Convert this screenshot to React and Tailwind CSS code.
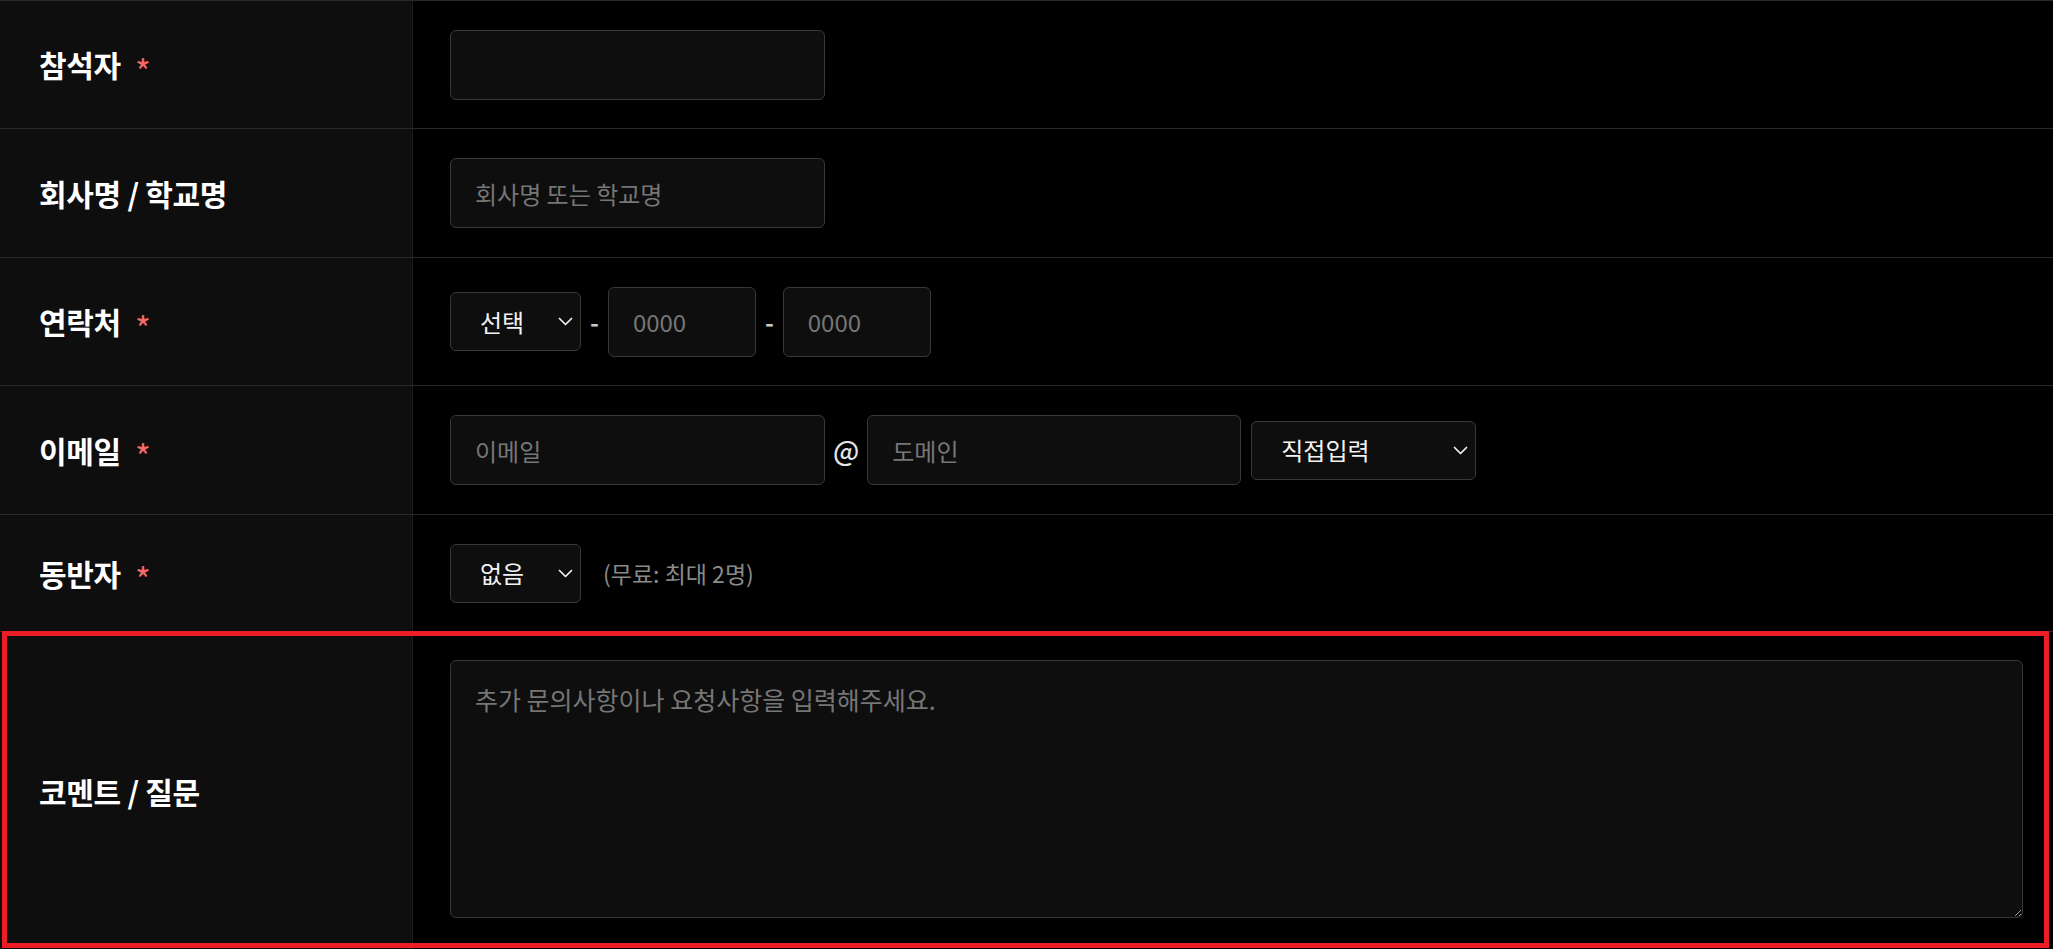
const inputBox =
  'h-[70px] rounded-[6px] border border-[#383838] bg-[#0e0e0e] px-6 text-[24px] text-white placeholder:text-[#767676] outline-none';

function Chevron() {
  return (
    <svg width="15" height="9" viewBox="0 0 15 9" fill="none" className="shrink-0">
      <path d="M1.5 1.5l6 6 6-6" stroke="#f2f2f2" strokeWidth="1.7" strokeLinecap="round" strokeLinejoin="round" />
    </svg>
  );
}

function FakeSelect({ value, width }) {
  return (
    <div
      className={`flex h-[59px] items-center justify-between rounded-[6px] border border-[#383838] bg-[#0e0e0e] pl-[29px] pr-[7px] text-[24px] text-[#f2f2f2] ${width}`}>
      <span>{value}</span>
      <Chevron />
    </div>
  );
}

function Row({ label, required, height, children }) {
  return (
    <div className={`flex border-b border-[#2a2a2a] ${height}`}>
      <div className="flex w-[413px] shrink-0 items-center border-r border-[#1c1c1c] bg-[#0e0e0e] pl-[39px]">
        <span className="text-[30px] font-bold tracking-[-0.01em] text-white">{label}</span>
        {required && (
          <span className="ml-[14px] translate-y-[6px] text-[34px] leading-none text-[#f26a6a]">*</span>
        )}
      </div>
      <div className="flex flex-1 items-center bg-black pl-[37px]">{children}</div>
    </div>
  );
}

export default function App() {
  return (
    <div className="min-h-screen bg-black font-['Noto_Sans_CJK_KR','Noto_Sans',sans-serif]">
      <div className="border-t border-[#2a2a2a]">
        <Row label="참석자" required height="h-[128px]">
          <input type="text" className={`${inputBox} w-[375px]`} />
        </Row>

        <Row label="회사명 / 학교명" height="h-[129px]">
          <input type="text" placeholder="회사명 또는 학교명" className={`${inputBox} w-[375px]`} />
        </Row>

        <Row label="연락처" required height="h-[128px]">
          <div className="flex items-center gap-[9px]">
            <FakeSelect value="선택" width="w-[131px]" />
            <span className="text-[24px] font-semibold text-[#c8c8c8]">-</span>
            <input type="text" placeholder="0000" className={`${inputBox} w-[148px]`} />
            <span className="text-[24px] font-semibold text-[#c8c8c8]">-</span>
            <input type="text" placeholder="0000" className={`${inputBox} w-[148px]`} />
          </div>
        </Row>

        <Row label="이메일" required height="h-[129px]">
          <div className="flex items-center gap-[8px]">
            <input type="text" placeholder="이메일" className={`${inputBox} w-[375px]`} />
            <span className="text-[27px] font-medium text-[#e6e6e6]">@</span>
            <input type="text" placeholder="도메인" className={`${inputBox} w-[374px]`} />
            <div className="ml-[2px]">
              <FakeSelect value="직접입력" width="w-[225px]" />
            </div>
          </div>
        </Row>

        <Row label="동반자" required height="h-[117px]">
          <div className="flex items-center gap-[22px]">
            <FakeSelect value="없음" width="w-[131px]" />
            <span className="text-[23px] text-[#8a8a8a]">(무료: 최대 2명)</span>
          </div>
        </Row>

        <div className="relative flex h-[318px]">
          <div className="flex w-[413px] shrink-0 items-center border-r border-[#1c1c1c] bg-[#0e0e0e] pl-[39px]">
            <span className="text-[30px] font-bold tracking-[-0.01em] text-white">코멘트 / 질문</span>
          </div>
          <div className="flex flex-1 bg-black pb-[32px] pl-[37px] pr-[30px] pt-[28px]">
            <textarea
              placeholder="추가 문의사항이나 요청사항을 입력해주세요."
              className="h-full w-full rounded-[6px] border border-[#383838] bg-[#0e0e0e] px-6 pt-[20px] text-[25px] text-white outline-none placeholder:text-[#767676]"
            />
          </div>
          <div className="pointer-events-none absolute bottom-[2px] left-[2px] right-[4px] top-[-1px] border-[5px] border-[#ee1c25]" />
        </div>
      </div>
    </div>
  );
}
